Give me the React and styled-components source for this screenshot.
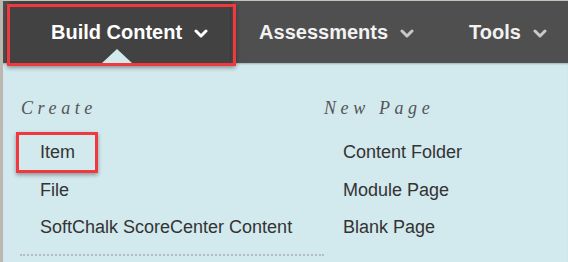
import React from "react";
import styled, { createGlobalStyle } from "styled-components";

const Global = createGlobalStyle`
  html, body { margin: 0; padding: 0; background: #d2e9ee; }
  #root { width: 568px; height: 262px; overflow: hidden; }
`;

const Page = styled.div`
  width: 568px;
  height: 262px;
  box-sizing: border-box;
  border-left: 3px solid #bcb8b0;
  border-top: 1px solid #c6c2ba;
  display: flex;
  flex-direction: column;
  overflow: hidden;
  font-family: "Liberation Sans", Arial, sans-serif;
`;

const NavBar = styled.nav`
  height: 62px;
  flex: none;
  background: #4f4f4f;
  display: flex;
  align-items: stretch;
  padding-left: 7px;
  position: relative;
  z-index: 2;
`;

const Tab = styled.div`
  position: relative;
  display: flex;
  align-items: center;
  gap: 12px;
  padding: 0 ${(p) => (p.$active ? "22px" : "26px")} 0
    ${(p) => (p.$active ? "41px" : "29px")};
  width: ${(p) => (p.$active ? "222px" : "auto")};
  box-sizing: border-box;
  background: ${(p) => (p.$active ? "#424242" : "transparent")};
  box-shadow: ${(p) => (p.$active ? "1px 0 4px rgba(0,0,0,0.45)" : "none")};
  color: ${(p) => (p.$active ? "#ffffff" : "#f2f2f2")};
  font-weight: bold;
  font-size: 20px;
  white-space: nowrap;
`;

const Caret = styled.span`
  position: absolute;
  bottom: 0;
  left: ${(p) => p.$left}px;
  width: 0;
  height: 0;
  border-left: 15px solid transparent;
  border-right: 15px solid transparent;
  border-bottom: 14px solid #d2e9ee;
`;

const Callout = styled.span`
  position: absolute;
  top: ${(p) => p.$top}px;
  left: ${(p) => p.$left}px;
  width: ${(p) => p.$w}px;
  height: ${(p) => p.$h}px;
  box-sizing: border-box;
  border: 3px solid #f0393e;
  box-shadow: 0 2px 4px rgba(0, 0, 0, 0.35);
  pointer-events: none;
  z-index: 3;
`;

const Chevron = ({ color }) => (
  <svg width="14" height="9" viewBox="0 0 14 9" style={{ marginTop: 3 }}>
    <polyline
      points="2,2 7,7 12,2"
      fill="none"
      stroke={color}
      strokeWidth="3"
      strokeLinecap="round"
      strokeLinejoin="round"
    />
  </svg>
);

const Panel = styled.section`
  flex: 1;
  background: #d2e9ee;
  box-shadow: inset 0 2px 2px -1px rgba(60, 80, 90, 0.35);
  display: grid;
  grid-template-columns: 303px 1fr;
  padding: 34px 0 0 18px;
`;

const Column = styled.div`
  display: flex;
  flex-direction: column;
`;

const Heading = styled.h3`
  margin: 0 0 15px;
  font-family: "Liberation Serif", "Times New Roman", serif;
  font-style: italic;
  font-weight: normal;
  font-size: 18px;
  line-height: 22px;
  letter-spacing: 4.6px;
  color: #555555;
`;

const Item = styled.div`
  position: relative;
  padding-left: 19px;
  font-size: 18px;
  line-height: 37.5px;
  color: #333333;
  white-space: nowrap;
`;

const Separator = styled.hr`
  margin: 7px 0 0 -1px;
  border: none;
  border-top: 2px dotted #b4bcbe;
  height: 0;
`;

export default function App() {
  return (
    <>
      <Global />
      <Page>
        <NavBar>
          <Tab $active>
            Build Content
            <Chevron color="#ffffff" />
            <Caret $left={92} />
            <Callout $top={3} $left={-3} $w={229} $h={62} />
          </Tab>
          <Tab>
            Assessments
            <Chevron color="#c9c9c9" />
          </Tab>
          <Tab>
            Tools
            <Chevron color="#c9c9c9" />
          </Tab>
        </NavBar>
        <Panel>
          <Column>
            <Heading>Create</Heading>
            <Item>
              Item
              <Callout $top={-2} $left={-5} $w={82} $h={41} />
            </Item>
            <Item>File</Item>
            <Item>SoftChalk ScoreCenter Content</Item>
            <Separator />
          </Column>
          <Column>
            <Heading>New Page</Heading>
            <Item>Content Folder</Item>
            <Item>Module Page</Item>
            <Item>Blank Page</Item>
          </Column>
        </Panel>
      </Page>
    </>
  );
}
